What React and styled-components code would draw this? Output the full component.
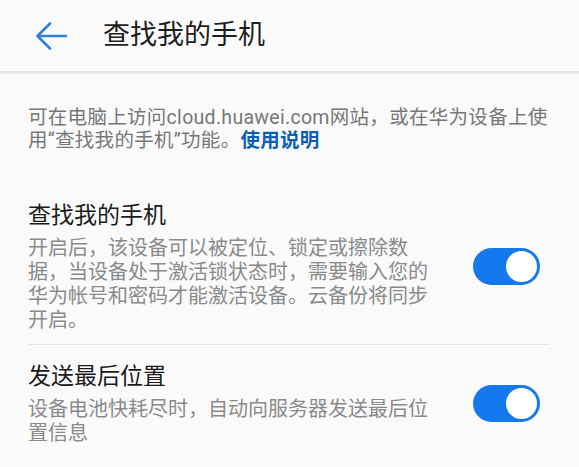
import React from "react";
import styled, { createGlobalStyle } from "styled-components";

const Global = createGlobalStyle`
  html, body { margin: 0; padding: 0; background: #fafafa; }
  body { font-family: Roboto, "Noto Sans CJK SC", "Noto Sans", sans-serif; }
`;

const Page = styled.div`
  width: 579px;
  min-height: 467px;
  background: #fafafa;
  overflow: hidden;
`;

const Header = styled.header`
  height: 71px;
  display: flex;
  align-items: center;
  padding-left: 35px;
  border-bottom: 3px solid #e6e6e6;
  background: #fbfbfb;
`;

const BackButton = styled.button`
  border: 0;
  background: none;
  padding: 0;
  margin: 0 36px 0 0;
  width: 32px;
  height: 28px;
  display: flex;
  align-items: center;
  cursor: pointer;
`;

const HeaderTitle = styled.h1`
  margin: 0;
  font-size: 27px;
  font-weight: 400;
  color: #1e1e1e;
  line-height: 32px;
  position: relative;
  top: -1px;
`;

const Info = styled.p`
  margin: 33px 12px 31px 28px;
  font-size: 19.5px;
  line-height: 22.5px;
  letter-spacing: 0.3px;
  color: #777;
`;

const Link = styled.a`
  color: #0d5fb6;
  font-weight: 700;
  text-decoration: none;
`;

const Row = styled.div`
  margin: 0 29px 0 28px;
  padding: ${(p) => (p.$last ? "17px 0 12px" : "18px 0 12px")};
  display: flex;
  align-items: center;
  justify-content: space-between;
  border-bottom: ${(p) => (p.$last ? "none" : "1px solid #e6e6e6")};
`;

const Texts = styled.div`
  width: 410px;
`;

const RowTitle = styled.div`
  font-size: 23px;
  line-height: 30px;
  color: #1b1b1b;
  margin-bottom: 5px;
`;

const RowDesc = styled.div`
  font-size: 20px;
  line-height: 24px;
  color: #8a8a8a;
`;

const Toggle = styled.div`
  width: 67px;
  height: 37px;
  border-radius: 19px;
  background: #1479ec;
  margin-right: 10px;
  display: flex;
  align-items: center;
  justify-content: ${(p) => (p.$on ? "flex-end" : "flex-start")};
  padding: 0 3px;
  box-sizing: border-box;
  flex-shrink: 0;
`;

const Knob = styled.div`
  width: 31px;
  height: 31px;
  border-radius: 50%;
  background: #fff;
`;

const BackArrow = () => (
  <svg width="32" height="28" viewBox="0 0 32 28" fill="none">
    <path
      d="M31 14H2.5M15 1.5L2.5 14L15 26.5"
      stroke="#2f80e0"
      strokeWidth="2.6"
      strokeLinecap="round"
      strokeLinejoin="round"
    />
  </svg>
);

const items = [
  {
    title: "查找我的手机",
    desc: "开启后，该设备可以被定位、锁定或擦除数据，当设备处于激活锁状态时，需要输入您的华为帐号和密码才能激活设备。云备份将同步开启。",
  },
  {
    title: "发送最后位置",
    desc: "设备电池快耗尽时，自动向服务器发送最后位置信息",
  },
];

export default function App() {
  return (
    <Page>
      <Global />
      <Header>
        <BackButton aria-label="返回">
          <BackArrow />
        </BackButton>
        <HeaderTitle>查找我的手机</HeaderTitle>
      </Header>
      <Info>
        可在电脑上访问cloud.huawei.com网站，或在华为设备上使用“查找我的手机”功能。
        <Link href="#">使用说明</Link>
      </Info>
      {items.map((it, i) => (
        <Row key={it.title} $last={i === items.length - 1}>
          <Texts>
            <RowTitle>{it.title}</RowTitle>
            <RowDesc>{it.desc}</RowDesc>
          </Texts>
          <Toggle $on>
            <Knob />
          </Toggle>
        </Row>
      ))}
    </Page>
  );
}
